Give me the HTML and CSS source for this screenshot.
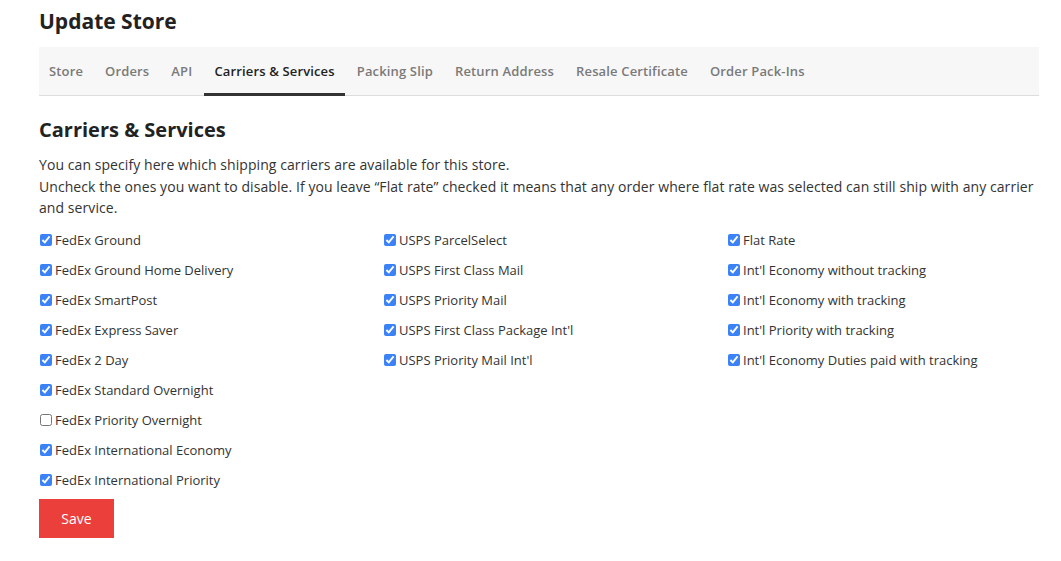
FILE: index.html
```html
<!DOCTYPE html>
<html lang="en">

<head>
  <meta charset="UTF-8">
  <meta name="viewport" content="width=device-width, initial-scale=1.0">
  <title>Update Store</title>
  <link rel="stylesheet" href="styles.css">
</head>

<body>

  <div class="container">
    <h1>Update Store</h1>

    <ul class="tabs">
      <li>Store</li>
      <li>Orders</li>
      <li>API</li>
      <li class="active">Carriers &amp; Services</li>
      <li>Packing Slip</li>
      <li>Return Address</li>
      <li>Resale Certificate</li>
      <li>Order Pack-Ins</li>
    </ul>

    <h2>Carriers &amp; Services</h2>
    <p class="intro">
      You can specify here which shipping carriers are available for this store.<br>
      Uncheck the ones you want to disable. If you leave “Flat rate” checked it means that any order where flat rate was selected can still ship with any carrier and service.
    </p>

    <div class="carriers">
      <div class="column">
        <label><input type="checkbox" checked> FedEx Ground</label>
        <label><input type="checkbox" checked> FedEx Ground Home Delivery</label>
        <label><input type="checkbox" checked> FedEx SmartPost</label>
        <label><input type="checkbox" checked> FedEx Express Saver</label>
        <label><input type="checkbox" checked> FedEx 2 Day</label>
        <label><input type="checkbox" checked> FedEx Standard Overnight</label>
        <label><input type="checkbox"> FedEx Priority Overnight</label>
        <label><input type="checkbox" checked> FedEx International Economy</label>
        <label><input type="checkbox" checked> FedEx International Priority</label>
      </div>
      <div class="column">
        <label><input type="checkbox" checked> USPS ParcelSelect</label>
        <label><input type="checkbox" checked> USPS First Class Mail</label>
        <label><input type="checkbox" checked> USPS Priority Mail</label>
        <label><input type="checkbox" checked> USPS First Class Package Int'l</label>
        <label><input type="checkbox" checked> USPS Priority Mail Int'l</label>
      </div>
      <div class="column">
        <label><input type="checkbox" checked> Flat Rate</label>
        <label><input type="checkbox" checked> Int'l Economy without tracking</label>
        <label><input type="checkbox" checked> Int'l Economy with tracking</label>
        <label><input type="checkbox" checked> Int'l Priority with tracking</label>
        <label><input type="checkbox" checked> Int'l Economy Duties paid with tracking</label>
      </div>
    </div>

    <button class="save">Save</button>
  </div>

</body>

</html>
```

FILE: styles.css
```css
body {
  font-family: "Open Sans", sans-serif;
  margin: 0;
  padding: 0;
  background-color: #ffffff;
  color: #333333;
}

.container {
  width: 1000px;
  margin-left: 39px;
}

h1 {
  font-size: 21px;
  font-weight: bold;
  color: #222222;
  margin: 0;
  padding-top: 7px;
  height: 40px;
}

.tabs {
  list-style: none;
  margin: 0;
  padding: 0;
  display: flex;
  gap: 2px;
  height: 48px;
  background-color: #f7f7f7;
  border-bottom: 1px solid #dddddd;
}

.tabs li {
  padding: 0 10px;
  display: flex;
  align-items: center;
  font-size: 13px;
  font-weight: 600;
  letter-spacing: 0.15px;
  color: #7a7a7a;
  border-bottom: 3px solid transparent;
  margin-bottom: -1px;
  padding-top: 2px;
}

.tabs li.active {
  color: #222222;
  border-bottom-color: #333333;
}

h2 {
  font-size: 20px;
  font-weight: bold;
  color: #222222;
  margin: 20px 0 0;
}

.intro {
  font-size: 14px;
  line-height: 21.5px;
  letter-spacing: 0.07px;
  margin: 11px 0 6px;
}

.carriers {
  display: grid;
  grid-template-columns: 344px 344px 1fr;
}

.column label {
  display: flex;
  align-items: center;
  height: 30px;
  font-size: 13px;
  color: #333333;
}

.column input {
  width: 12px;
  height: 12px;
  margin: 0 3px 0 1px;
  accent-color: #3b82f6;
}

.save {
  margin-top: 4px;
  width: 75px;
  height: 39px;
  border: none;
  background-color: #ea3f3b;
  color: #ffffff;
  font-family: "Open Sans", sans-serif;
  font-size: 14px;
  cursor: pointer;
}
```
